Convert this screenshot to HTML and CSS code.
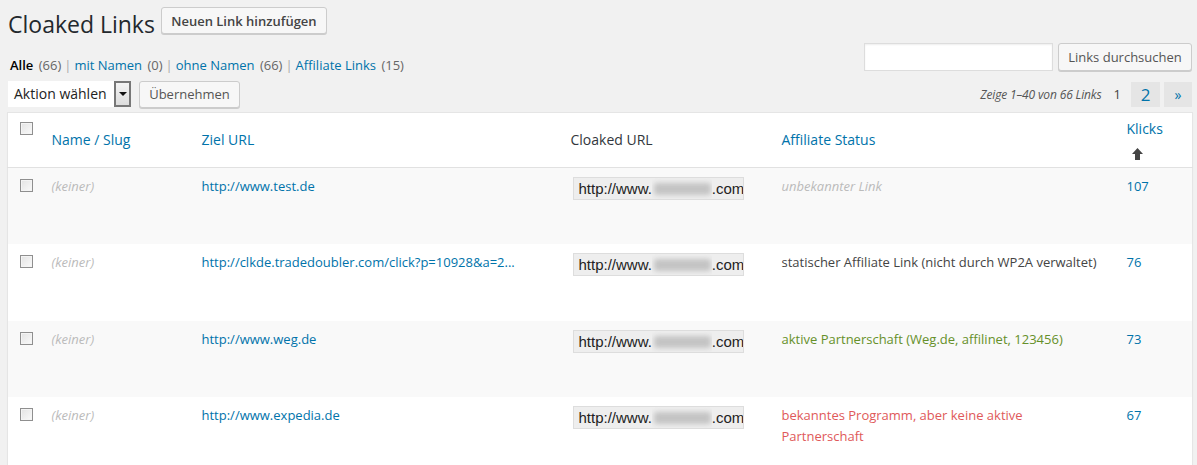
FILE: index.html
```html
<!DOCTYPE html>
<html lang="de">
<head>
<meta charset="utf-8">
<title>Cloaked Links</title>
<link rel="stylesheet" href="styles.css">
</head>
<body>
<div class="wrap">
  <div class="page-head">
    <h1 class="page-title">Cloaked Links</h1>
    <span class="btn btn-add">Neuen Link hinzufügen</span>
  </div>

  <div class="filter-row">
    <ul class="subsubsub">
      <li><span class="current">Alle</span> <span class="count">(66)</span></li>
      <li class="sep">|</li>
      <li><a>mit Namen</a> <span class="count">(0)</span></li>
      <li class="sep">|</li>
      <li><a>ohne Namen</a> <span class="count">(66)</span></li>
      <li class="sep">|</li>
      <li><a>Affiliate Links</a> <span class="count">(15)</span></li>
    </ul>
    <div class="search-box">
      <span class="search-input"></span>
      <span class="btn btn-search">Links durchsuchen</span>
    </div>
  </div>

  <div class="tablenav">
    <div class="bulk">
      <div class="select">
        <span class="select-label">Aktion wählen</span>
        <span class="select-arrow"><span class="tri"></span></span>
      </div>
      <span class="btn btn-apply">Übernehmen</span>
    </div>
    <div class="pages">
      <span class="displaying">Zeige 1–40 von 66 Links</span>
      <span class="page-cur">1</span>
      <a class="page-box page-num">2</a>
      <a class="page-box page-next">»</a>
    </div>
  </div>

  <table class="links">
    <colgroup>
      <col class="c-check"><col class="c-name"><col class="c-url"><col class="c-cloak"><col class="c-status"><col class="c-clicks">
    </colgroup>
    <thead>
      <tr>
        <th class="check"><span class="cb"></span></th>
        <th><a>Name / Slug</a></th>
        <th><a>Ziel URL</a></th>
        <th class="plain">Cloaked URL</th>
        <th><a>Affiliate Status</a></th>
        <th class="clicks"><a>Klicks</a><span class="sort-arrow"><svg width="11" height="12" viewBox="0 0 11 12"><path d="M5.5 0 L11 6 L8 6 L8 12 L3 12 L3 6 L0 6 Z" fill="#444"/></svg></span></th>
      </tr>
    </thead>
    <tbody>
      <tr class="alt">
        <td class="check"><span class="cb"></span></td>
        <td class="none">(keiner)</td>
        <td><a>http://www.test.de</a></td>
        <td><span class="cloak"><span class="url-a">http://www.</span><span class="blur"><i></i></span><span class="url-b">.com</span></span></td>
        <td class="st-unknown">unbekannter Link</td>
        <td><a>107</a></td>
      </tr>
      <tr>
        <td class="check"><span class="cb"></span></td>
        <td class="none">(keiner)</td>
        <td><a>http://clkde.tradedoubler.com/click?p=10928&amp;a=2...</a></td>
        <td><span class="cloak"><span class="url-a">http://www.</span><span class="blur"><i></i></span><span class="url-b">.com</span></span></td>
        <td class="st-static">statischer Affiliate Link (nicht durch WP2A verwaltet)</td>
        <td><a>76</a></td>
      </tr>
      <tr class="alt">
        <td class="check"><span class="cb"></span></td>
        <td class="none">(keiner)</td>
        <td><a>http://www.weg.de</a></td>
        <td><span class="cloak"><span class="url-a">http://www.</span><span class="blur"><i></i></span><span class="url-b">.com</span></span></td>
        <td class="st-active">aktive Partnerschaft (Weg.de, affilinet, 123456)</td>
        <td><a>73</a></td>
      </tr>
      <tr>
        <td class="check"><span class="cb"></span></td>
        <td class="none">(keiner)</td>
        <td><a>http://www.expedia.de</a></td>
        <td><span class="cloak"><span class="url-a">http://www.</span><span class="blur"><i></i></span><span class="url-b">.com</span></span></td>
        <td class="st-known">bekanntes Programm, aber keine aktive Partnerschaft</td>
        <td><a>67</a></td>
      </tr>
    </tbody>
  </table>
</div>
</body>
</html>
```

FILE: styles.css
```css
html, body {
  margin: 0;
  padding: 0;
  background: #f1f1f1;
}
body {
  font-family: "Open Sans", "Liberation Sans", sans-serif;
  font-size: 13px;
  color: #444;
  overflow: hidden;
  height: 465px;
}
a {
  color: #0073aa;
  text-decoration: none;
}
.wrap {
  padding: 0 5px 0 7px;
}

/* heading */
.page-head {
  display: flex;
  align-items: flex-start;
  padding-top: 7px;
}
.page-title {
  margin: 3px 6px 0 1px;
  font-size: 23px;
  font-weight: 400;
  line-height: 29px;
  color: #23282d;
}
.btn {
  display: inline-flex;
  align-items: center;
  box-sizing: border-box;
  border: 1px solid #ccc;
  border-radius: 3px;
  background: #f7f7f7;
  box-shadow: 0 1px 0 #ccc;
  color: #555;
  font-size: 13px;
  white-space: nowrap;
}
.btn-add {
  height: 27px;
  width: 166px;
  justify-content: center;
  font-weight: 600;
  color: #444;
}

/* filter row */
.filter-row {
  display: flex;
  justify-content: space-between;
  align-items: flex-start;
  margin-top: 4px;
  height: 37px;
}
.subsubsub {
  list-style: none;
  margin: 12px 0 0 3px;
  padding: 0;
  display: flex;
  align-items: baseline;
  line-height: 21px;
  font-size: 13px;
  color: #666;
}
.subsubsub li {
  white-space: nowrap;
}
.subsubsub .sep {
  margin: 0 3px;
  color: #aaa;
}
.subsubsub .current {
  color: #000;
  font-weight: 600;
}
.subsubsub .count {
  color: #666;
  margin-left: 2px;
}
.search-box {
  display: flex;
  gap: 5px;
}
.search-input {
  display: block;
  box-sizing: border-box;
  width: 189px;
  height: 28px;
  background: #fff;
  border: 1px solid #ddd;
  box-shadow: inset 0 1px 2px rgba(0,0,0,0.07);
}
.btn-search {
  height: 28px;
  width: 134px;
  justify-content: center;
}

/* tablenav */
.tablenav {
  display: flex;
  justify-content: space-between;
  align-items: center;
  height: 28px;
  margin-bottom: 4px;
}
.bulk {
  display: flex;
  align-items: center;
  gap: 8px;
  padding-left: 1px;
}
.select {
  display: flex;
  align-items: stretch;
  width: 123px;
  height: 26px;
  box-sizing: border-box;
  background: #fff;
}
.select-label {
  flex: 1;
  font-size: 14px;
  line-height: 26px;
  padding-left: 6px;
  color: #222;
  white-space: nowrap;
}
.select-arrow {
  width: 17px;
  box-sizing: border-box;
  border: 2px solid #777;
  background: linear-gradient(#f4f4f4, #dcdcdc);
  display: flex;
  align-items: center;
  justify-content: center;
}
.tri {
  width: 0;
  height: 0;
  border-left: 4px solid transparent;
  border-right: 4px solid transparent;
  border-top: 4px solid #111;
}
.btn-apply {
  height: 27px;
  width: 101px;
  justify-content: center;
}
.pages {
  display: flex;
  align-items: center;
  gap: 4px;
}
.displaying {
  font-style: italic;
  font-size: 12px;
  color: #555;
  margin-right: 8px;
  letter-spacing: -0.15px;
}
.page-cur {
  font-size: 13px;
  color: #444;
  margin-right: 6px;
}
.page-box {
  display: flex;
  align-items: center;
  justify-content: center;
  height: 25px;
  background: #e5e5e5;
}
.page-num {
  width: 29px;
  font-size: 17px;
}
.page-next {
  width: 28px;
  font-size: 14px;
}

/* table */
.links {
  width: 1185px;
  border-collapse: collapse;
  table-layout: fixed;
  background: #fff;
  border: 1px solid #e5e5e5;
  box-shadow: 0 1px 1px rgba(0,0,0,0.04);
}
.c-check { width: 35px; }
.c-name { width: 150px; }
.c-url { width: 369px; }
.c-cloak { width: 211px; }
.c-status { width: 345px; }
.c-clicks { width: 75px; }

.links th {
  height: 42px;
  padding: 5px 10px 7px 9px;
  text-align: left;
  font-weight: 400;
  font-size: 14px;
  line-height: 21px;
  vertical-align: middle;
  border-bottom: 1px solid #e1e1e1;
  color: #32373c;
}
.links th.check {
  vertical-align: top;
  padding: 9px 0 0 12px;
}
.links th.clicks a {
  display: block;
}
.sort-arrow {
  display: block;
  height: 21px;
  padding-left: 5px;
  padding-top: 5px;
  box-sizing: border-box;
}
.links td {
  height: 76.67px;
  box-sizing: border-box;
  padding: 8px 10px 8px 9px;
  vertical-align: top;
  line-height: 21px;
  font-size: 13px;
  color: #555;
}
.links td.check {
  padding: 11px 0 0 12px;
}
.links tr.alt td {
  background: #f9f9f9;
}
.cb {
  display: block;
  box-sizing: border-box;
  width: 13px;
  height: 13px;
  border: 1px solid #8f8f8f;
  background: linear-gradient(135deg, #e3e3e3, #fafafa);
  box-shadow: inset 0 0 0 1px #f4f4f4;
}
td.none {
  color: #bbb;
  font-style: italic;
}
.cloak {
  display: flex;
  align-items: center;
  box-sizing: border-box;
  width: 171px;
  height: 23px;
  margin: 1px 0 0 2px;
  padding-left: 5px;
  border: 1px solid #ddd;
  background: #eee;
  font-family: "Liberation Sans", Arial, sans-serif;
  font-size: 15px;
  line-height: 21px;
  color: #222;
  white-space: nowrap;
  overflow: hidden;
}
.url-a, .url-b {
  flex: none;
}
.blur {
  flex: none;
  display: block;
  width: 60px;
  height: 21px;
  overflow: hidden;
}
.blur i {
  display: block;
  margin: 5px 1px 0 2px;
  height: 12px;
  background: #c4c4c4;
  border-radius: 3px;
  filter: blur(2.5px);
}
.st-unknown {
  color: #bbb !important;
  font-style: italic;
}
.st-static {
  color: #444 !important;
}
.st-active {
  color: #66902a !important;
}
.st-known {
  color: #e0595a !important;
}
```
